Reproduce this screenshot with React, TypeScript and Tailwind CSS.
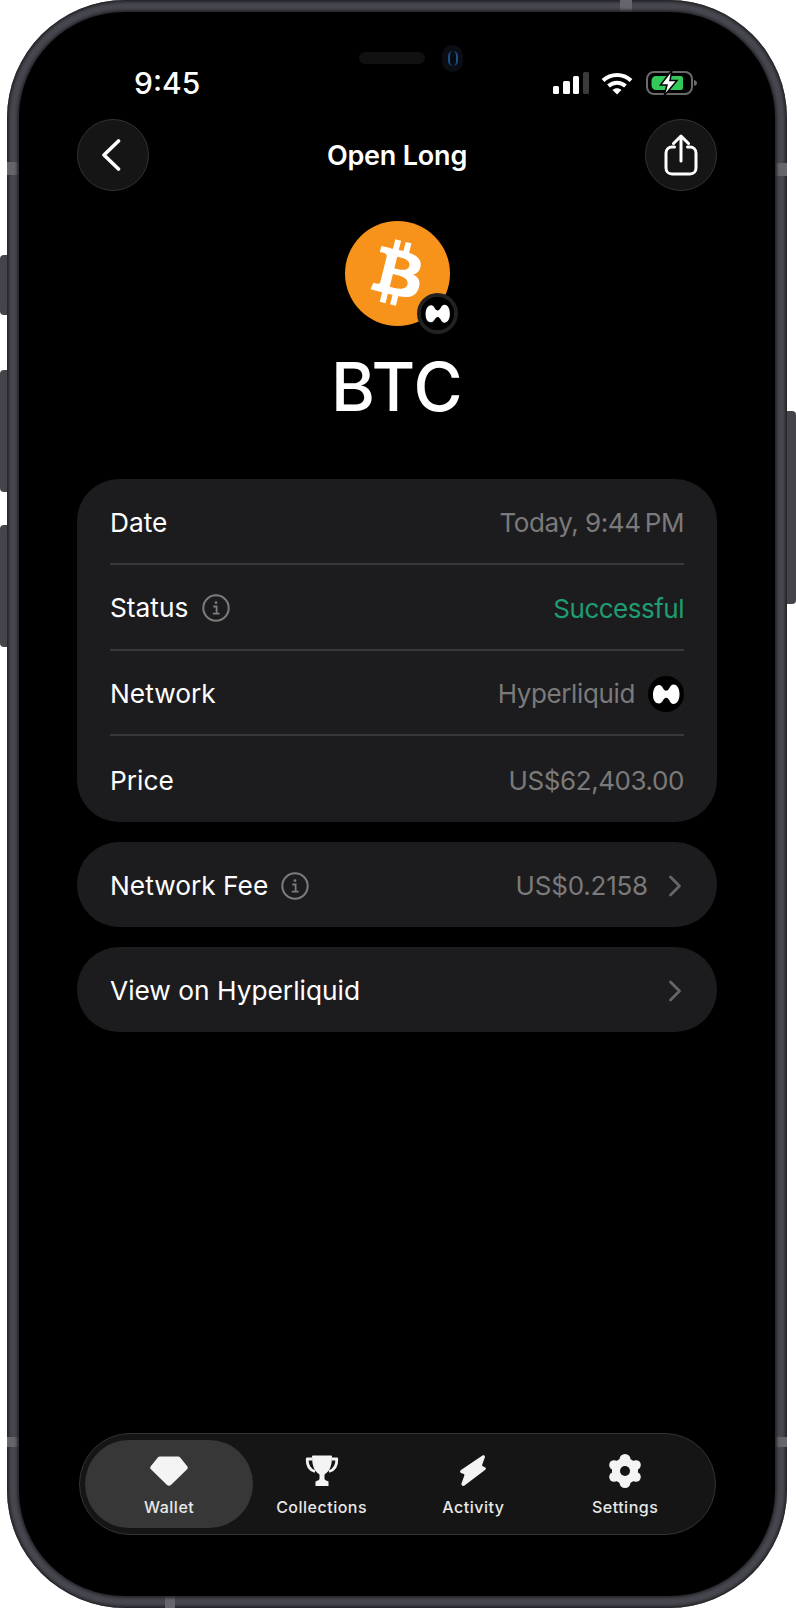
import React from "react";

const HyperliquidMark = ({ className }: { className: string }) => (
  <svg viewBox="0 0 36 36" className={className}>
    <circle cx="18" cy="18" r="18" fill="#000" />
    <path
      fill="#fff"
      d="M5 19C5 13 7.500 9 11 9C15 9 15 14.800 18.200 14.800C21.500 14.800 21.500 8.500 25.500 8.500C29.500 8.500 31.500 13 31.500 18.500C31.500 24 29 28 25.500 28C21.500 28 21.500 21.800 18.200 21.800C15 21.800 15 27.500 11 27.500C7.500 27.500 5 24.500 5 19Z"
    />
  </svg>
);

const InfoIcon = () => (
  <svg viewBox="0 0 28 28" className="h-7 w-7 shrink-0" fill="none" stroke="#7c7c7c">
    <circle cx="14" cy="14" r="12.700" strokeWidth="2" />
    <path d="M11.300 12.500H14.600V19.500M10.800 19.700H17.600" strokeWidth="1.800" />
    <circle cx="14" cy="8.600" r="1.400" fill="#7c7c7c" stroke="none" />
  </svg>
);

const Chevron = () => (
  <svg viewBox="0 0 14 22" className="h-[22px] w-[14px] shrink-0" fill="none" stroke="#666" strokeWidth="2.800" strokeLinecap="round" strokeLinejoin="round">
    <path d="M2.500 2L11.500 11L2.500 20" />
  </svg>
);

const Diamond = () => (
  <svg viewBox="0 0 38 30" className="h-[30px] w-[38px]" fill="#f4f4f4">
    <path d="M10 0.500H28C29 0.500 29.800 0.900 30.400 1.700L37.200 10.200C38 11.200 38 12.300 37.100 13.200L21.200 28.800C19.900 30 18.100 30 16.800 28.800L0.900 13.200C0 12.300 0 11.200 0.800 10.200L7.600 1.700C8.200 0.900 9 0.500 10 0.500Z" />
  </svg>
);

const Trophy = () => (
  <svg viewBox="0 0 34 31" className="h-[31px] w-[34px]">
    <path d="M7 4H2.200C2 11 4.500 15 10 16.500M27 4H31.800C32 11 29.500 15 24 16.500" fill="none" stroke="#f4f4f4" strokeWidth="2.800" strokeLinejoin="round" />
    <path fill="#f4f4f4" d="M8 0.500H26C26.500 0.500 27 1 27 1.600C27 10 25 16.500 19.500 19.500V23.500C19.500 25 21 25.500 23.500 26.500V31H10.500V26.500C13 25.500 14.500 25 14.500 23.500V19.500C9 16.500 7 10 7 1.600C7 1 7.500 0.500 8 0.500Z" />
  </svg>
);

const Bolt = () => (
  <svg viewBox="0 0 26 31" className="h-[31px] w-[26px]" fill="#f4f4f4">
    <path d="M22.500 0.600C24 -0.200 25.300 0.800 24.800 2.400L22.200 9.800C21.900 10.700 22.300 11.200 23.200 11.500L24.500 11.900C26.200 12.500 26.200 14.200 25 15.100L4.500 30.400C2.800 31.600 1 30.400 1.500 28.400L4.300 20.600C4.600 19.700 4.200 19.100 3.300 18.800L1.500 18.200C-0.200 17.600 -0.300 16 1 15Z" />
  </svg>
);

const Gear = () => (
  <svg viewBox="0 0 34 34" className="h-[34px] w-[34px]">
    <g fill="#f4f4f4">
      <path d="M17 2L30 9.500V24.500L17 32L4 24.500V9.500Z" />
      <circle cx="17" cy="5.500" r="5.500" />
      <circle cx="17" cy="28.500" r="5.500" />
      <circle cx="6" cy="11" r="4.800" />
      <circle cx="28" cy="11" r="4.800" />
      <circle cx="6" cy="23" r="4.800" />
      <circle cx="28" cy="23" r="4.800" />
    </g>
    <circle cx="17" cy="17" r="5" fill="#151515" />
  </svg>
);

const tabs = [
  { label: "Wallet", icon: <Diamond />, active: true },
  { label: "Collections", icon: <Trophy />, active: false },
  { label: "Activity", icon: <Bolt />, active: false },
  { label: "Settings", icon: <Gear />, active: false },
];

const Row = ({ children, divider }: { children: React.ReactNode; divider?: boolean }) => (
  <div className={`flex h-[85.750px] items-center justify-between pt-[3px] ${divider ? "border-b-2 border-[#38383a]" : ""}`}>
    {children}
  </div>
);

const App = () => {
  return (
    <div className="relative h-[1608px] w-[796px] overflow-hidden bg-white font-['Inter',sans-serif] text-[26.300px] text-white">
      {/* side buttons */}
      <div className="absolute left-0 top-[255px] h-[60px] w-[9px] rounded-l-[4px] bg-[#44444a]" />
      <div className="absolute left-0 top-[370px] h-[122px] w-[9px] rounded-l-[4px] bg-[#44444a]" />
      <div className="absolute left-0 top-[525px] h-[122px] w-[9px] rounded-l-[4px] bg-[#44444a]" />
      <div className="absolute right-0 top-[411px] h-[193px] w-[11px] rounded-r-[4px] bg-[#44444a]" />

      <div className="relative ml-[7px] h-[1608px] w-[780px] rounded-[118px] bg-[#47474f] p-[12px] shadow-[inset_0_0_3px_2px_#232327]">
        {/* antenna bands */}
        <div className="absolute left-0 top-[162px] h-[13px] w-[12px] bg-[#65656b]" />
        <div className="absolute left-0 top-[1437px] h-[10px] w-[12px] bg-[#65656b]" />
        <div className="absolute right-0 top-[163px] h-[13px] w-[12px] bg-[#65656b]" />
        <div className="absolute right-0 top-[1437px] h-[10px] w-[12px] bg-[#65656b]" />
        <div className="absolute left-[613px] top-0 h-[12px] w-[12px] bg-[#65656b]" />
        <div className="absolute bottom-0 left-[158px] h-[12px] w-[10px] bg-[#65656b]" />

        <div className="relative flex h-full flex-col rounded-[106px] bg-black px-[58px] shadow-[0_0_3px_2px_#26262b]">
          {/* speaker and camera */}
          <div className="absolute left-[340px] top-[40px] h-[12px] w-[66px] rounded-full bg-[#111]" />
          <div className="absolute left-[423px] top-[33px] flex h-[27px] w-[21px] items-center justify-center rounded-full bg-[#0b0d12]">
            <div className="h-[15px] w-[10px] rounded-full border-x-2 border-[#1d4f86] bg-[#070b12]" />
          </div>

          {/* status bar */}
          <div className="relative -mx-[12px] flex h-[46px] items-center justify-between pt-[48px] pl-[69px] pr-[31px] box-content">
            <span className="text-[30px] font-medium leading-none">9:45</span>
            <div className="flex items-center gap-[11px]">
              <svg viewBox="0 0 37 22" className="h-[22px] w-[37px]">
                <rect x="0" y="14" width="6" height="8" rx="1.500" fill="#fff" />
                <rect x="10" y="9" width="7" height="13" rx="1.500" fill="#fff" />
                <rect x="20" y="4" width="6" height="18" rx="1.500" fill="#fff" />
                <rect x="30" y="0" width="6" height="22" rx="1.500" fill="#3a3a3a" />
              </svg>
              <svg viewBox="0 0 32 23" className="h-[23px] w-[32px]" fill="none" stroke="#fff" strokeWidth="4">
                <path d="M2 8.500C10 1 22 1 30 8.500" />
                <path d="M7.500 14C12.500 9.500 19.500 9.500 24.500 14" />
                <path d="M16 22.500L11.500 18C14 15.800 18 15.800 20.500 18Z" fill="#fff" stroke="none" />
              </svg>
              <svg viewBox="0 0 52 26" className="ml-[2px] h-[26px] w-[52px]">
                <rect x="1" y="2" width="45" height="22" rx="7" fill="none" stroke="#6a6a6a" strokeWidth="2" />
                <path d="M10 6H35C36 6 37 7 37 8V18C37 19 36 20 35 20H10C7.500 20 5.500 18 5.500 15.500V10.500C5.500 8 7.500 6 10 6Z" fill="#34c759" />
                <path d="M48 10V16C50 15.500 51 14.500 51 13C51 11.500 50 10.500 48 10Z" fill="#6a6a6a" />
                <path d="M26 0L14.500 15H21L18 26L31 10.500H24Z" fill="#fff" stroke="#000" strokeWidth="1.500" />
              </svg>
            </div>
          </div>

          {/* header */}
          <div className="mt-[13px] flex h-[72px] items-center justify-between">
            <div className="flex h-[72px] w-[72px] items-center justify-center rounded-full border-[1.500px] border-[#333] bg-[#151515]">
              <svg viewBox="0 0 20 32" className="mr-[4px] h-[32px] w-[20px]" fill="none" stroke="#fff" strokeWidth="3.600" strokeLinecap="round" strokeLinejoin="round">
                <path d="M17.500 2L3 16L17.500 30" />
              </svg>
            </div>
            <span className="pt-[2px] text-[27px] font-semibold tracking-[-0.200px]">Open Long</span>
            <div className="flex h-[72px] w-[72px] items-center justify-center rounded-full border-[1.500px] border-[#333] bg-[#151515]">
              <svg viewBox="0 0 34 42" className="h-[42px] w-[34px]" fill="none" stroke="#fff" strokeWidth="3" strokeLinecap="round" strokeLinejoin="round">
                <path d="M10.500 13H8C4.500 13 2 15.500 2 19V34C2 37.500 4.500 40 8 40H26C29.500 40 32 37.500 32 34V19C32 15.500 29.500 13 26 13H23.500" />
                <path d="M17 27V2.500M9.500 9.500L17 2L24.500 9.500" />
              </svg>
            </div>
          </div>

          {/* asset */}
          <div className="mt-[30px] flex flex-col items-center">
            <div className="relative h-[105px] w-[105px]">
              <svg viewBox="0 0 64 64" className="h-[105px] w-[105px]">
                <circle cx="32" cy="32" r="32" fill="#f7931a" />
                <path
                  fill="#fff"
                  d="M46.110 27.441c.636-4.258-2.606-6.547-7.039-8.074l1.438-5.768-3.512-.875-1.400 5.616c-.922-.230-1.870-.447-2.812-.662l1.410-5.653-3.509-.875-1.439 5.766c-.764-.174-1.514-.346-2.242-.527l.004-.018-4.842-1.209-.934 3.750s2.605.597 2.550.634c1.422.355 1.680 1.296 1.636 2.042l-1.638 6.571c.098.025.225.061.365.117l-.370-.092-2.297 9.205c-.174.432-.615 1.080-1.609.834.035.051-2.552-.637-2.552-.637l-1.743 4.020 4.570 1.139c.850.213 1.683.436 2.502.646l-1.453 5.835 3.507.875 1.440-5.772c.957.260 1.887.500 2.797.726L27.504 50.800l3.511.875 1.453-5.823c5.987 1.133 10.490.676 12.383-4.738 1.527-4.360-.075-6.875-3.225-8.516 2.294-.531 4.022-2.040 4.483-5.157zM38.087 38.690c-1.086 4.360-8.426 2.004-10.807 1.412l1.928-7.729c2.380.594 10.011 1.770 8.880 6.317zm1.085-11.312c-.990 3.966-7.100 1.951-9.083 1.457l1.748-7.010c1.983.494 8.367 1.416 7.335 5.553z"
                />
              </svg>
              <div className="absolute -bottom-[8px] -right-[8px] flex h-[41px] w-[41px] items-center justify-center rounded-full border-[4px] border-[#222] bg-black">
                <HyperliquidMark className="h-[33px] w-[33px]" />
              </div>
            </div>
            <div className="mt-[21px] text-[67px] font-medium leading-[80px] tracking-[0.300px]">BTC</div>
          </div>

          {/* details */}
          <div className="mt-[52px] rounded-[42px] bg-[#1c1c1e] px-[33px]">
            <Row divider>
              <span>Date</span>
              <span className="text-[26px] tracking-[-0.450px] text-[#7a7a7a]">Today, 9:44{"\u2009"}PM</span>
            </Row>
            <Row divider>
              <span className="flex items-center gap-[14px]">
                Status
                <InfoIcon />
              </span>
              <span className="text-[26px] tracking-[-0.500px] text-[#1f9d72]">Successful</span>
            </Row>
            <Row divider>
              <span>Network</span>
              <span className="flex items-center gap-[13px] text-[26px] tracking-[-0.370px] text-[#7a7a7a]">
                Hyperliquid
                <HyperliquidMark className="h-[36px] w-[36px]" />
              </span>
            </Row>
            <Row>
              <span>Price</span>
              <span className="text-[26px] tracking-[-0.420px] text-[#7a7a7a]">US$62,403.00</span>
            </Row>
          </div>

          <div className="mt-[20px] flex h-[85px] items-center justify-between rounded-[42px] bg-[#1c1c1e] pl-[33px] pr-[35px] pt-[2px]">
            <span className="flex items-center gap-[13px]">
              Network Fee
              <InfoIcon />
            </span>
            <span className="flex items-center gap-[20px] text-[26px] tracking-[-0.200px] text-[#7a7a7a]">
              US$0.2158
              <Chevron />
            </span>
          </div>

          <div className="mt-[20px] flex h-[85px] items-center justify-between rounded-[42px] bg-[#1c1c1e] pl-[33px] pr-[35px] pt-[2px]">
            <span>View on Hyperliquid</span>
            <Chevron />
          </div>

          {/* tab bar */}
          <div className="mb-[61px] ml-[2px] mr-[1px] mt-auto grid h-[102px] grid-cols-4 items-stretch rounded-[51px] border-[1.500px] border-[#333] bg-[#151515] px-[14px] py-[6px]">
            {tabs.map((tab) => (
              <div
                key={tab.label}
                className={`flex flex-col items-center justify-center rounded-[44px] pt-[4px] ${tab.active ? "-ml-[9px] -mr-[7.500px] bg-[#373737]" : ""}`}
              >
                <div className="flex h-[34px] items-center justify-center">{tab.icon}</div>
                <span className="mt-[7px] text-[16px] font-medium leading-[24px] tracking-[0.500px] text-[#e8e8e8]">{tab.label}</span>
              </div>
            ))}
          </div>
        </div>
      </div>
    </div>
  );
};

export default App;
